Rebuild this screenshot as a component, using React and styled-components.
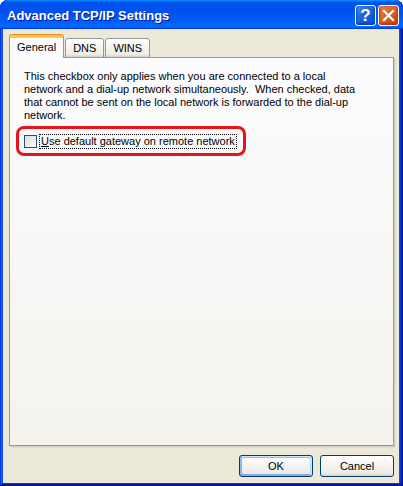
import styled, { createGlobalStyle } from "styled-components"

const Global = createGlobalStyle`
  html, body {
    margin: 0;
    padding: 0;
    background: #ffffff;
  }
  #root {
    width: 403px;
    height: 486px;
  }
`

const tabs = ["General", "DNS", "WINS"]

export default function App() {
  return (
    <>
      <Global />
      <Styled.Window>
        <Styled.TitleBar>
          <Styled.Title>Advanced TCP/IP Settings</Styled.Title>
          <Styled.Controls>
            <Styled.CaptionButton>
              <Styled.Help>?</Styled.Help>
            </Styled.CaptionButton>
            <Styled.CaptionButton $close>
              <svg width="13" height="13" viewBox="0 0 13 13">
                <path d="M2 2 L11 11 M11 2 L2 11" stroke="#fff" strokeWidth="2.2" strokeLinecap="square" />
              </svg>
            </Styled.CaptionButton>
          </Styled.Controls>
        </Styled.TitleBar>

        <Styled.Body>
          <Styled.TabStrip>
            {tabs.map((name, i) => (
              <Styled.Tab key={name} $active={i === 0}>{name}</Styled.Tab>
            ))}
          </Styled.TabStrip>

          <Styled.Panel>
            <Styled.Text>
              This checkbox only applies when you are connected to a local<br />
              network and a dial-up network simultaneously.&nbsp; When checked, data<br />
              that cannot be sent on the local network is forwarded to the dial-up<br />
              network.
            </Styled.Text>
            <Styled.Highlight>
              <Styled.Checkbox />
              <Styled.Label><u>U</u>se default gateway on remote network</Styled.Label>
            </Styled.Highlight>
          </Styled.Panel>

          <Styled.Buttons>
            <Styled.Button $default>OK</Styled.Button>
            <Styled.Button>Cancel</Styled.Button>
          </Styled.Buttons>
        </Styled.Body>
      </Styled.Window>
    </>
  )
}

const Styled = {
  Window: styled("div")`
    width: 403px;
    height: 486px;
    box-sizing: border-box;

    display: flex;
    flex-direction: column;

    background: #0055ea;
    border-radius: 8px 8px 0 0;
    box-shadow: inset -1px -1px #00138c, inset 1px 1px #0831d9, inset -2px -2px #001ea0,
      inset 2px 2px #166aee, inset -3px -3px #003bda, inset 3px 3px #0855dd;
    overflow: hidden;
  `,

  TitleBar: styled("div")`
    height: 29px;
    flex-shrink: 0;

    display: flex;
    align-items: center;
    justify-content: space-between;

    padding: 0 4px 0 7px;

    background: linear-gradient(180deg, #0997ff, #0053ee 8%, #0050ee 40%, #06f 88%, #06f 93%, #005bff 95%, #003dd7 96%, #003dd7);
    border-radius: 8px 8px 0 0;
  `,

  Title: styled("span")`
    font-family: "Liberation Sans", Arial, sans-serif;
    font-weight: bold;
    font-size: 13px;
    color: #ffffff;
    text-shadow: 1px 1px #0f1089;
    padding-top: 1px;
  `,

  Controls: styled("div")`
    display: flex;
    gap: 2px;
    padding-top: 2px;
  `,

  CaptionButton: styled("div")`
    width: 21px;
    height: 21px;
    box-sizing: border-box;

    display: flex;
    align-items: center;
    justify-content: center;

    border: 1px solid #ffffff;
    border-radius: 3px;

    background: ${({ $close }) => $close
      ? "radial-gradient(circle at 90% 90%, #cc4600 0%, #dc6527 55%, #e9825a 100%)"
      : "radial-gradient(circle at 90% 90%, #0054e9 0%, #2263d5 55%, #4495ff 100%)"};
    box-shadow: inset 0 -1px 2px 1px ${({ $close }) => $close ? "#b8370c" : "#0045b7"};
  `,

  Help: styled("span")`
    font-family: "Liberation Sans", Arial, sans-serif;
    font-weight: bold;
    font-size: 17px;
    line-height: 1;
    color: #ffffff;
  `,

  Body: styled("div")`
    flex: 1;
    margin: 0 4px 3px 3px;
    padding: 6px 5px 6px 6px;

    display: flex;
    flex-direction: column;

    background: #ece9d8;

    font-family: "Liberation Sans", Arial, sans-serif;
    font-size: 11px;
    color: #000000;
  `,

  TabStrip: styled("div")`
    display: flex;
    align-items: flex-end;
    gap: 1px;
    position: relative;
    z-index: 1;
    margin-bottom: -1px;
  `,

  Tab: styled("div")`
    box-sizing: border-box;
    height: ${({ $active }) => $active ? "23px" : "20px"};
    padding: 0 7px;
    padding-bottom: ${({ $active }) => $active ? "2px" : "0"};

    display: flex;
    align-items: center;
    justify-content: center;

    border: 1px solid #919b9c;
    border-bottom: ${({ $active }) => $active ? "none" : "1px solid #919b9c"};
    border-top: ${({ $active }) => $active ? "3px solid #ffc83c" : "1px solid #919b9c"};
    border-radius: 3px 3px 0 0;

    background: ${({ $active }) => $active
      ? "#fcfcfe"
      : "linear-gradient(180deg, #ffffff, #ecebe5 86%, #d8d0c4)"};
    box-shadow: ${({ $active }) => $active ? "0 -1px #e68b2c" : "none"};
  `,

  Panel: styled("div")`
    flex: 1;
    padding: 12px 14px;

    background: linear-gradient(180deg, #fcfcfe, #f4f3ee);
    border: 1px solid #919b9c;
    box-shadow: 1px 1px #d0cebf, 2px 2px #e3e0d0;
  `,

  Text: styled("p")`
    margin: 0;
    line-height: 13px;
    white-space: nowrap;
  `,

  Highlight: styled("div")`
    width: 230px;
    height: 30px;
    box-sizing: border-box;
    margin: 4px 0 0 -8px;
    padding-left: 5px;

    display: flex;
    align-items: center;
    gap: 3px;

    border: 3px solid #e8141d;
    border-radius: 8px;
  `,

  Checkbox: styled("div")`
    width: 13px;
    height: 13px;
    box-sizing: border-box;
    flex-shrink: 0;

    border: 1px solid #1c5180;
    background: linear-gradient(135deg, #dcdcd7, #ffffff);
  `,

  Label: styled("span")`
    padding: 0 1px;
    line-height: 13px;
    outline: 1px dotted #000000;
    white-space: nowrap;
  `,

  Buttons: styled("div")`
    display: flex;
    justify-content: flex-end;
    gap: 7px;
    margin-top: 9px;
  `,

  Button: styled("div")`
    width: 74px;
    height: 22px;
    box-sizing: border-box;

    display: flex;
    align-items: center;
    justify-content: center;

    border: 1px solid #003c74;
    border-radius: 3px;
    background: linear-gradient(180deg, #ffffff, #ecebe6 86%, #d6d0c5);
    box-shadow: ${({ $default }) => $default
      ? "inset -1px 1px #cee7ff, inset 1px 2px #98b8ea, inset -2px 2px #bcd4f6, inset 1px -1px #89ade4, inset 2px -2px #89ade4"
      : "none"};
  `
}
